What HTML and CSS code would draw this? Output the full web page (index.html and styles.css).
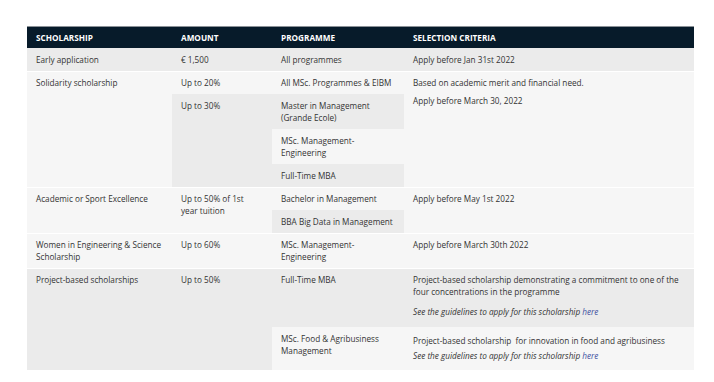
FILE: index.html
```html
<!DOCTYPE html>
<html>
<head>
  <title>Scholarships</title>
  <link rel="stylesheet" href="styles.css">
</head>
<body>
  <table class="grid">
    <colgroup>
      <col class="c-name">
      <col class="c-amount">
      <col class="c-prog">
      <col class="c-crit">
    </colgroup>
    <thead>
      <tr>
        <th>Scholarship</th>
        <th>Amount</th>
        <th>Programme</th>
        <th>Selection criteria</th>
      </tr>
    </thead>
    <tbody>
      <tr class="alt">
        <td>Early application</td>
        <td>€ 1,500</td>
        <td>All programmes</td>
        <td>Apply before Jan 31st 2022</td>
      </tr>
      <tr class="group">
        <td rowspan="4">Solidarity scholarship</td>
        <td>Up to 20%</td>
        <td>All MSc. Programmes &amp; EIBM</td>
        <td rowspan="4" class="crit">
          <p>Based on academic merit and financial need.</p>
          <p>Apply before March 30, 2022</p>
        </td>
      </tr>
      <tr class="alt">
        <td rowspan="3">Up to 30%</td>
        <td>Master in Management (Grande Ecole)</td>
      </tr>
      <tr>
        <td>MSc. Management-Engineering</td>
      </tr>
      <tr class="alt">
        <td>Full-Time MBA</td>
      </tr>
      <tr class="group">
        <td rowspan="2">Academic or Sport Excellence</td>
        <td rowspan="2">Up to 50% of 1st<br>year tuition</td>
        <td>Bachelor in Management</td>
        <td rowspan="2">Apply before May 1st 2022</td>
      </tr>
      <tr class="alt">
        <td>BBA Big Data in Management</td>
      </tr>
      <tr class="group">
        <td>Women in Engineering &amp; Science Scholarship</td>
        <td>Up to 60%</td>
        <td>MSc. Management-Engineering</td>
        <td>Apply before March 30th 2022</td>
      </tr>
      <tr class="alt group">
        <td rowspan="2">Project-based scholarships</td>
        <td rowspan="2">Up to 50%</td>
        <td>Full-Time MBA</td>
        <td class="crit crit-wide">
          <p>Project-based scholarship demonstrating a commitment to one of the four concentrations in the programme</p>
          <p><em>See the guidelines to apply for this scholarship <a href="#">here</a></em></p>
        </td>
      </tr>
      <tr>
        <td>MSc. Food &amp; Agribusiness Management</td>
        <td class="crit crit-tight">
          <p>Project-based scholarship&nbsp; for innovation in food and agribusiness</p>
          <p><em>See the guidelines to apply for this scholarship <a href="#">here</a></em></p>
        </td>
      </tr>
    </tbody>
  </table>
</body>
</html>
```

FILE: styles.css
```css
body {
  margin: 0;
  padding: 26px 20px 0 27px;
  background: #fff;
  font-family: "Open Sans", Arial, sans-serif;
  font-size: 8.2px;
  line-height: 12px;
  color: #333;
}
.grid {
  width: 667px;
  border-collapse: collapse;
  table-layout: fixed;
}
.c-name { width: 145px; }
.c-amount { width: 100px; }
.c-prog { width: 132px; }
.c-crit { width: 290px; }
th {
  background: #071b2a;
  color: #fff;
  font-weight: bold;
  text-transform: uppercase;
  text-align: left;
  padding: 5px 9px 4px;
  border-top: 1px solid #8b9197;
}
td {
  vertical-align: top;
  padding: 6px 9px 5px;
  background: #f6f6f6;
}
tr.alt td {
  background: #ebebeb;
}
tr.group td {
  border-top: 1px solid #fff;
  padding-top: 5px;
}
.crit p {
  margin: 0 0 6px;
}
.crit p:last-child {
  margin-bottom: 0;
}
tr.group .crit-wide {
  padding-top: 5px;
  padding-bottom: 9px;
}
.crit-wide p:first-child {
  margin-bottom: 8px;
}
.crit-tight {
  padding: 8px 9px;
}
.crit-tight p:first-child {
  margin-bottom: 3px;
}
a {
  color: #3c4fa0;
  text-decoration: none;
}
```
